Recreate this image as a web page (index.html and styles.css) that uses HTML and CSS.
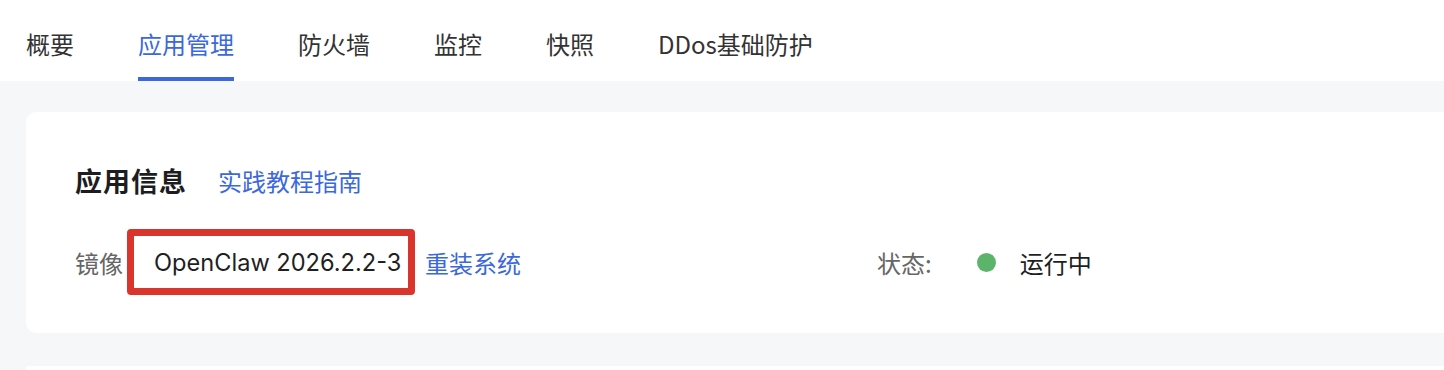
FILE: index.html
```html
<!DOCTYPE html>
<html lang="zh-CN">
<head>
<meta charset="UTF-8">
<meta name="viewport" content="width=device-width, initial-scale=1.0">
<title>应用管理</title>
<link rel="stylesheet" href="styles.css">
</head>
<body>
<div class="tabs">
    <div class="tab">概要</div>
    <div class="tab active">应用管理</div>
    <div class="tab">防火墙</div>
    <div class="tab">监控</div>
    <div class="tab">快照</div>
    <div class="tab">DDos基础防护</div>
</div>

<div class="page">
    <div class="card">
        <div class="card-title">
            <h2>应用信息</h2>
            <a class="link">实践教程指南</a>
        </div>
        <div class="info-row">
            <div class="info-item image-item">
                <span class="label">镜像</span>
                <span class="mark">OpenClaw 2026.2.2-3</span>
                <a class="link">重装系统</a>
            </div>
            <div class="info-item">
                <span class="label">状态:</span>
                <span class="dot"></span>
                <span class="value">运行中</span>
            </div>
        </div>
    </div>
    <div class="card next"></div>
</div>
</body>
</html>
```

FILE: styles.css
```css
body {
    font-family: "Noto Sans CJK SC", "Noto Sans", sans-serif;
    margin: 0;
    padding: 0;
    background-color: #f6f7f9;
    overflow: hidden;
}

/* Barra de abas */
.tabs {
    height: 81px;
    background-color: #fff;
    display: flex;
    padding-left: 26px;
    gap: 64px;
}

.tab {
    font-size: 24px;
    color: #333;
    line-height: 24px;
    padding-top: 32px;
    box-sizing: border-box;
    height: 81px;
    border-bottom: 4px solid transparent;
}

.tab.active {
    color: #3b68dc;
    border-bottom-color: #3b68dc;
}

.page {
    padding: 31px 0 0 26px;
}

.card {
    background-color: #fff;
    border-radius: 10px 0 0 10px;
    padding: 49px 0 38px 49px;
}

.card.next {
    margin-top: 33px;
    padding: 0;
    height: 6px;
}

.card-title {
    display: flex;
    align-items: center;
    gap: 31px;
    height: 38px;
}

.card-title h2 {
    margin: 0;
    font-size: 27px;
    font-weight: bold;
    color: #1d1d1f;
    letter-spacing: 1px;
}

.link {
    color: #3b68dc;
    font-size: 24px;
    cursor: pointer;
}

.info-row {
    display: flex;
    align-items: center;
    margin-top: 30px;
}

.info-item {
    display: flex;
    align-items: center;
}

.image-item {
    width: 802px;
}

.label {
    font-size: 24px;
    color: #666;
}

/* Caixa vermelha de destaque */
.mark {
    margin-left: 4px;
    margin-right: 10px;
    border: 7px solid #d9352c;
    border-radius: 4px;
    display: flex;
    align-items: center;
    padding-left: 20px;
    box-sizing: border-box;
    width: 288px;
    height: 66px;
    font-family: "Inter", "Noto Sans", sans-serif;
    font-size: 23.6px;
    color: #1f1f1f;
    white-space: nowrap;
}

.dot {
    width: 19px;
    height: 19px;
    border-radius: 50%;
    background-color: #5bb46a;
    margin-left: 45px;
    margin-right: 24px;
}

.value {
    font-size: 24px;
    color: #1f1f1f;
}
```
